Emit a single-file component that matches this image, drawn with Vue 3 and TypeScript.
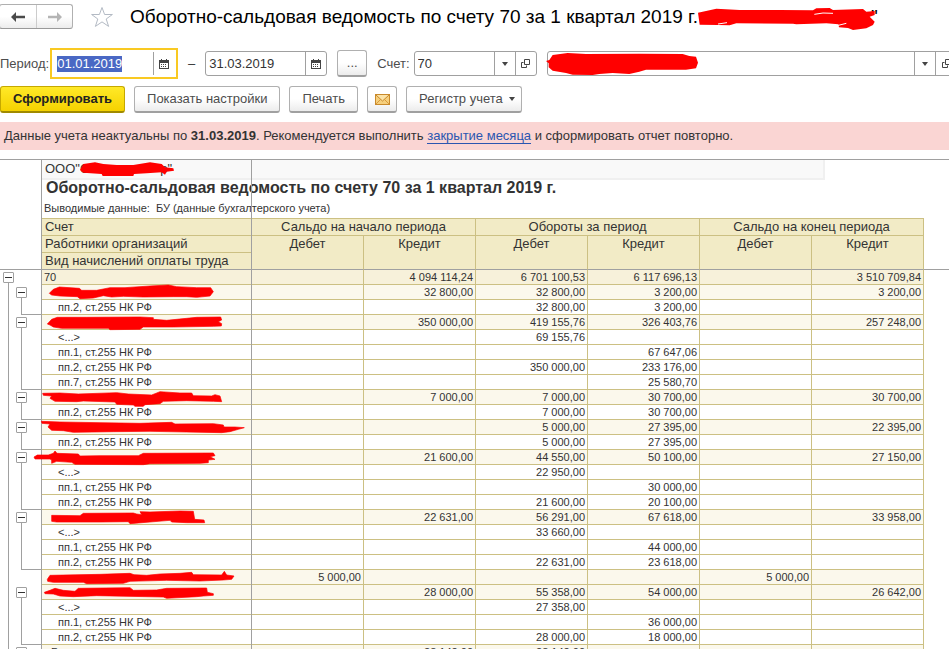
<script setup lang="ts">
import { computed, onMounted, ref } from 'vue'

type Kind = 'total' | 'group' | 'single' | 'item'

interface Row {
  name: string
  kind: Kind
  values: string[]
  mark?: { top: number; points: string }
}

const item1 = 'пп.1, ст.255 НК РФ'
const item2 = 'пп.2, ст.255 НК РФ'
const item7 = 'пп.7, ст.255 НК РФ'

const rows: Row[] = [
  { name: '70', kind: 'total', values: ['', '4 094 114,24', '6 701 100,53', '6 117 696,13', '', '3 510 709,84'] },
  {
    name: '', kind: 'group', values: ['', '32 800,00', '32 800,00', '3 200,00', '', '3 200,00'],
    mark: { top: 60, points: '148,85 160,73 178,66 238,70 245,76 290,76 330,68 375,68 450,63 505,60 530,65 590,68 632,68 640,80 630,93 590,97 560,95 520,95 430,96 370,94 335,96 310,92 280,99 240,101 232,95 180,93 155,90' },
  },
  { name: item2, kind: 'item', values: ['', '', '32 800,00', '3 200,00', '', ''] },
  {
    name: '', kind: 'group', values: ['', '350 000,00', '419 155,76', '326 403,76', '', '257 248,00'],
    mark: { top: 150, points: '142,177 155,163 172,157 260,157 420,156 460,158 460,163 500,166 560,160 590,157 662,156 665,165 655,170 665,176 664,183 640,184 520,186 430,186 420,193 330,194 325,190 240,190 185,190 160,186 150,180' },
  },
  { name: '<...>', kind: 'item', values: ['', '', '69 155,76', '', '', ''] },
  { name: item1, kind: 'item', values: ['', '', '', '67 647,06', '', ''] },
  { name: item2, kind: 'item', values: ['', '', '350 000,00', '233 176,00', '', ''] },
  { name: item7, kind: 'item', values: ['', '', '', '25 580,70', '', ''] },
  {
    name: '', kind: 'group', values: ['', '7 000,00', '7 000,00', '30 700,00', '', '30 700,00'],
    mark: { top: 375, points: '128,385 180,384 235,387 350,383 385,387 455,390 480,380 540,384 575,384 580,392 635,393 645,389 660,393 665,410 640,409 560,407 490,409 480,416 435,419 430,424 405,424 400,420 350,418 345,411 250,408 230,410 165,409 150,400 155,393 130,391' },
  },
  { name: item2, kind: 'item', values: ['', '', '7 000,00', '30 700,00', '', ''] },
  {
    name: '', kind: 'group', values: ['', '', '5 000,00', '27 395,00', '', '22 395,00'],
    mark: { top: 465, points: '124,469 180,471 300,473 420,475 515,472 525,477 640,476 670,480 672,486 705,486 733,488 715,493 690,500 665,503 560,501 450,499 340,500 220,502 190,497 155,496 144,486 150,477 126,475' },
  },
  { name: item2, kind: 'item', values: ['', '', '5 000,00', '27 395,00', '', ''] },
  {
    name: '', kind: 'group', values: ['', '21 600,00', '44 550,00', '50 100,00', '', '27 150,00'],
    mark: { top: 0, points: '102,21 112,15 145,15 160,10 165,3 171,10 235,12 240,18 300,17 415,17 430,10 640,9 645,17 630,20 645,28 625,30 625,38 600,40 450,41 430,44 225,43 215,37 170,34 155,40 155,30 150,27 105,27' },
  },
  { name: '<...>', kind: 'item', values: ['', '', '22 950,00', '', '', ''] },
  { name: item1, kind: 'item', values: ['', '', '', '30 000,00', '', ''] },
  { name: item2, kind: 'item', values: ['', '', '21 600,00', '20 100,00', '', ''] },
  {
    name: '', kind: 'group', values: ['', '22 631,00', '56 291,00', '67 618,00', '', '33 958,00'],
    mark: { top: 180, points: '155,196 240,197 250,190 400,189 410,192 425,194 420,185 450,186 540,183 580,184 584,208 612,210 614,218 560,218 515,216 510,211 450,216 390,221 385,215 300,216 170,216 155,214' },
  },
  { name: '<...>', kind: 'item', values: ['', '', '33 660,00', '', '', ''] },
  { name: item1, kind: 'item', values: ['', '', '', '44 000,00', '', ''] },
  { name: item2, kind: 'item', values: ['', '', '22 631,00', '23 618,00', '', ''] },
  {
    name: '', kind: 'single', values: ['5 000,00', '', '', '', '5 000,00', ''],
    mark: { top: 360, points: '142,388 150,376 300,373 390,370 402,374 440,376 480,372 540,370 575,367 580,374 665,375 673,364 680,375 702,378 695,388 670,390 600,393 500,391 390,394 370,400 260,401 250,397 160,397 143,394' },
  },
  {
    name: '', kind: 'group', values: ['', '28 000,00', '55 358,00', '54 000,00', '', '26 642,00'],
    mark: { top: 405, points: '133,427 150,421 165,415 190,421 225,424 235,415 390,413 400,421 470,420 500,415 620,414 622,427 640,431 640,436 610,438 590,440 500,445 490,441 290,437 220,440 180,438 160,432 135,431' },
  },
  { name: '<...>', kind: 'item', values: ['', '', '27 358,00', '', '', ''] },
  { name: item1, kind: 'item', values: ['', '', '', '36 000,00', '', ''] },
  { name: item2, kind: 'item', values: ['', '', '28 000,00', '18 000,00', '', ''] },
  { name: 'Б', kind: 'group', values: ['', '28 142,00', '28 142,00', '', '', ''] },
]

const collapsed = ref(new Set<number>())

function toggle(index: number) {
  const next = new Set(collapsed.value)
  if (next.has(index)) next.delete(index)
  else next.add(index)
  collapsed.value = next
}

const visibleRows = computed(() => {
  let owner = -1
  return rows
    .map((row, index) => {
      if (row.kind !== 'item') owner = index
      const last = row.kind === 'item' && rows[index + 1]?.kind !== 'item'
      return { ...row, index, owner, last }
    })
    .filter((row) => {
      if (row.index > 0 && collapsed.value.has(0)) return false
      return row.kind !== 'item' || !collapsed.value.has(row.owner)
    })
})

const dateFrom = ref('01.01.2019')
const dateTo = ref('31.03.2019')
const account = ref('70')
const company = ref('')
const fromInput = ref<HTMLInputElement | null>(null)

onMounted(() => {
  fromInput.value?.focus()
  fromInput.value?.select()
})
</script>

<template>
  <main class="page">
    <header class="titlebar">
      <div class="nav">
        <button type="button" aria-label="Назад">
          <svg width="14" height="10" viewBox="0 0 14 10"><path d="M0 5 5 0v3.8h9v2.4H5V10z" fill="#4a4a4a" /></svg>
        </button>
        <button type="button" aria-label="Вперед">
          <svg width="14" height="10" viewBox="0 0 14 10"><path d="M14 5 9 0v3.8H0v2.4h9V10z" fill="#b4b4b4" /></svg>
        </button>
      </div>
      <button type="button" class="star" aria-label="В избранное">
        <svg width="24" height="22" viewBox="0 0 24 22">
          <path d="M12 1.5 14.6 8.5H22.4L16.2 13 18.6 20.4 12 15.9 5.4 20.4 7.8 13 1.6 8.5H9.4Z" fill="#fff" stroke="#b3bac4" stroke-width="1" />
        </svg>
      </button>
      <h1>Оборотно-сальдовая ведомость по счету 70 за 1 квартал 2019 г.</h1>
      <svg class="title-mark" width="178" height="30" viewBox="175 6 534 90">
        <polygon points="175,38 230,26 300,30 420,30 520,31 530,25 570,24 580,30 670,27 680,35 705,33 705,45 690,50 705,65 700,75 680,85 640,90 625,84 598,82 596,73 560,70 470,73 460,71 290,70 270,76 235,75 180,74" fill="#f00" />
        <path d="M524 43 550 39 580 40M592 77 620 70M235 72 262 68" fill="none" stroke="#fff" stroke-width="3" />
      </svg>
      <span class="title-end">"</span>
    </header>

    <form class="filters" @submit.prevent>
      <label for="from">Период:</label>
      <div class="field date active">
        <input id="from" ref="fromInput" v-model="dateFrom" type="text" />
        <button type="button" aria-label="Выбрать дату начала">
          <svg width="10" height="10" viewBox="0 0 10 10"><path d="M0 1h2V0h1v1h4V0h1v1h2v9H0zM1 4v5h8V4z" fill="#444" fill-rule="evenodd" /><path d="M2 5h1v1H2zM4 5h1v1H4zM6 5h1v1H6zM2 7h1v1H2zM4 7h1v1H4zM6 7h1v1H6z" fill="#444" /></svg>
        </button>
      </div>
      <span class="dash">–</span>
      <div class="field date">
        <input v-model="dateTo" type="text" aria-label="Конец периода" />
        <button type="button" aria-label="Выбрать дату конца">
          <svg width="10" height="10" viewBox="0 0 10 10"><path d="M0 1h2V0h1v1h4V0h1v1h2v9H0zM1 4v5h8V4z" fill="#444" fill-rule="evenodd" /><path d="M2 5h1v1H2zM4 5h1v1H4zM6 5h1v1H6zM2 7h1v1H2zM4 7h1v1H4zM6 7h1v1H6z" fill="#444" /></svg>
        </button>
      </div>
      <button type="button" class="btn dots">...</button>
      <label for="account">Счет:</label>
      <div class="field account">
        <input id="account" v-model="account" type="text" />
        <button type="button" aria-label="Список счетов">
          <svg width="6" height="4" viewBox="0 0 6 4"><path d="M0 0h6L3 4z" fill="#444" /></svg>
        </button>
        <button type="button" aria-label="Открыть счет">
          <svg width="9" height="9" viewBox="0 0 9 9"><path d="M3.5 .5h5v5h-5zM2.5 3.5h-2v5h5v-2" fill="none" stroke="#444" /></svg>
        </button>
      </div>
      <div class="field company">
        <input v-model="company" type="text" aria-label="Организация" />
        <svg class="company-mark" width="152" height="24" viewBox="680 156 456 72">
          <polygon points="680,183 690,180 700,165 745,159 800,162 960,161 1090,162 1110,168 1130,170 1136,188 1130,205 1100,209 980,209 960,215 930,222 880,219 840,222 820,225 760,224 740,219 700,212 688,202 688,190" fill="#f00" />
        </svg>
        <button type="button" aria-label="Список организаций">
          <svg width="6" height="4" viewBox="0 0 6 4"><path d="M0 0h6L3 4z" fill="#444" /></svg>
        </button>
        <button type="button" aria-label="Открыть организацию">
          <svg width="9" height="9" viewBox="0 0 9 9"><path d="M3.5 .5h5v5h-5zM2.5 3.5h-2v5h5v-2" fill="none" stroke="#444" /></svg>
        </button>
      </div>
    </form>

    <div class="commands">
      <button type="button" class="btn primary">Сформировать</button>
      <button type="button" class="btn">Показать настройки</button>
      <button type="button" class="btn">Печать</button>
      <button type="button" class="btn mail" aria-label="Отправить по почте">
        <svg width="15" height="11" viewBox="0 0 15 11">
          <rect x=".5" y=".5" width="14" height="10" fill="#f6cf7c" stroke="#c98a2b" />
          <path d="M1 10 5.5 5.5M14 10 9.5 5.5" stroke="#d79a3c" />
          <path d="M1 1 7.5 7 14 1" fill="#fbe3a8" stroke="#c98a2b" />
        </svg>
      </button>
      <button type="button" class="btn menu">
        Регистр учета
        <svg width="6" height="4" viewBox="0 0 6 4"><path d="M0 0h6L3 4z" fill="#444" /></svg>
      </button>
    </div>

    <p class="notice">
      Данные учета неактуальны по <b>31.03.2019</b>. Рекомендуется выполнить <a href="#close">закрытие месяца</a> и сформировать отчет повторно.
    </p>

    <section class="sheet">
      <div class="preamble">
        <div class="org">
          <span>ООО"С</span>
          <svg width="94" height="18" viewBox="240 138 282 54">
            <polygon points="240,168 250,150 285,145 310,150 350,153 400,153 450,145 485,150 495,160 520,163 522,170 500,173 495,182 485,175 440,178 402,180 400,186 308,186 305,180 250,176" fill="#f00" />
          </svg>
          <span class="org-end">р"</span>
        </div>
        <h2>Оборотно-сальдовая ведомость по счету 70 за 1 квартал 2019 г.</h2>
        <p>Выводимые данные:&nbsp; БУ (данные бухгалтерского учета)</p>
      </div>

      <table>
        <colgroup>
          <col class="c-g1" />
          <col class="c-g2" />
          <col class="c-name" />
          <col v-for="n in 6" :key="n" class="c-num" />
          <col />
        </colgroup>
        <thead>
          <tr>
            <td colspan="2"></td>
            <th class="left">Счет</th>
            <th colspan="2">Сальдо на начало периода</th>
            <th colspan="2">Обороты за период</th>
            <th colspan="2">Сальдо на конец периода</th>
            <td></td>
          </tr>
          <tr>
            <td colspan="2"></td>
            <th class="left">Работники организаций</th>
            <th v-for="n in 6" :key="n" rowspan="2" class="bottom">{{ n % 2 ? 'Дебет' : 'Кредит' }}</th>
            <td></td>
          </tr>
          <tr>
            <td colspan="2" class="bottom"></td>
            <th class="left bottom">Вид начислений оплаты труда</th>
            <td class="bottom"></td>
          </tr>
        </thead>
        <tbody>
          <tr v-for="row in visibleRows" :key="row.index" :class="row.kind">
            <td class="g1">
              <button v-if="row.kind === 'total'" type="button" class="box" aria-label="Свернуть" @click="toggle(row.index)">
                <svg width="9" height="9" viewBox="0 0 9 9"><path d="M1 4h7v1H1z" fill="#333" /></svg>
              </button>
            </td>
            <td class="g2" :class="{ last: row.last }">
              <button v-if="row.kind === 'group'" type="button" class="box" aria-label="Свернуть" @click="toggle(row.index)">
                <svg width="9" height="9" viewBox="0 0 9 9"><path d="M1 4h7v1H1z" fill="#333" /></svg>
              </button>
            </td>
            <td class="name">
              {{ row.name }}
              <svg v-if="row.mark" class="mark" width="210" height="15" :viewBox="`126 ${row.mark.top} 630 45`">
                <polygon :points="row.mark.points" fill="#f00" stroke="#f00" stroke-width="2" stroke-linejoin="round" />
              </svg>
            </td>
            <td v-for="(value, i) in row.values" :key="i" class="num">{{ value }}</td>
            <td class="rest"></td>
          </tr>
        </tbody>
      </table>
    </section>
  </main>
</template>

<style>
body {
  background: #fff;
}
</style>

<style scoped>
.page {
  height: 100vh;
  overflow: hidden;
  display: flex;
  flex-direction: column;
  background: #fff;
  color: #333;
  font: 13px/16px "Liberation Sans", Arial, sans-serif;
}
button,
input {
  font: inherit;
  color: inherit;
  margin: 0;
  padding: 0;
  box-sizing: border-box;
}
svg {
  display: block;
  flex: none;
}
.titlebar {
  display: flex;
  align-items: center;
  height: 26px;
  padding-top: 4px;
  flex: none;
}
.nav {
  display: flex;
  align-self: flex-start;
  margin-left: -1px;
  height: 25px;
  box-sizing: border-box;
  border: 1px solid #b0b0b0;
  border-bottom-color: #999;
  border-radius: 3px;
  background: linear-gradient(#fff 50%, #ececec);
}
.nav button {
  width: 36px;
  display: flex;
  align-items: center;
  justify-content: center;
  border: 0;
  background: none;
}
.nav button + button {
  border-left: 1px solid #ccc;
}
.star {
  margin: 0 16px 0 17px;
  border: 0;
  background: none;
}
h1 {
  margin: 0;
  font-size: 19px;
  line-height: 24px;
  font-weight: 400;
  color: #000;
  white-space: nowrap;
}
.title-mark {
  z-index: 1;
}
.title-end {
  font-size: 19px;
  margin-left: -5px;
  color: #000;
}
.filters {
  display: flex;
  align-items: center;
  height: 31px;
  margin-top: 18px;
  flex: none;
}
.filters label {
  color: #4d4d4d;
}
.field {
  position: relative;
  display: flex;
  height: 25px;
  box-sizing: border-box;
  border: 1px solid #a0a0a0;
  border-radius: 3px;
  background: #fff;
}
.field input {
  flex: 1;
  min-width: 0;
  padding: 0 4px 0 3px;
  border: 0;
  outline: 0;
  background: none;
}
.field input::selection {
  background: #4a68c4;
  color: #fff;
}
.field button {
  flex: none;
  width: 21px;
  display: flex;
  align-items: center;
  justify-content: center;
  border: 0;
  border-left: 1px solid #a0a0a0;
  background: none;
}
.date {
  width: 122px;
}
.date.active {
  width: 128px;
  height: 31px;
  margin-left: 1px;
  padding: 2px;
  border: 2px solid #f9c922;
  border-radius: 0;
}
.dash {
  width: 27px;
  text-align: center;
}
.btn {
  height: 27px;
  padding: 0 12px;
  border: 1px solid #b0b0b0;
  border-bottom: 2px solid #a0a0a0;
  border-radius: 3px;
  background: linear-gradient(#fff 50%, #ececec);
  color: #4d4d4d;
  white-space: nowrap;
}
.dots {
  width: 30px;
  padding: 0;
  margin: 0 10px;
}
.account {
  width: 123px;
  margin: 0 10px 0 4px;
}
.company {
  flex: 1;
  margin-right: -8px;
}
.company-mark {
  position: absolute;
  left: -2px;
  top: 0;
}
.commands {
  display: flex;
  align-items: center;
  gap: 9px;
  margin-top: 7px;
  flex: none;
}
.primary {
  border-color: #c5a800;
  border-bottom-color: #a08a00;
  background: linear-gradient(#ffe928, #f5d200);
  color: #222;
  font-weight: 700;
}
.mail {
  width: 30px;
  padding: 0;
  display: flex;
  align-items: center;
  justify-content: center;
}
.menu {
  display: flex;
  align-items: center;
  gap: 6px;
  padding-right: 6px;
}
.notice {
  flex: none;
  margin: 9px 0;
  padding: 6px 4px;
  background: #fad5d3;
  white-space: nowrap;
}
.notice a {
  color: #2b55b0;
  text-decoration: none;
  border-bottom: 1px solid #2b55b0;
}
.sheet {
  position: relative;
  flex: 1;
  min-height: 0;
  overflow: hidden;
  border-top: 1px solid #a0a0a0;
}
.sheet::before,
.sheet::after {
  content: "";
  position: absolute;
  top: 0;
  bottom: 0;
  left: 41px;
  width: 1px;
  background: #a0a0a0;
  z-index: 1;
}
.sheet::after {
  left: 251px;
}
.preamble {
  padding-left: 42px;
  height: 58px;
}
.org {
  display: flex;
  align-items: center;
  height: 20px;
  box-sizing: border-box;
  max-width: 783px;
  padding-left: 3px;
  border: solid #f0f0f0;
  border-width: 0 2px 2px 0;
  background: #f9f9f9;
}
.org svg {
  margin-left: -9px;
  z-index: 2;
}
.org-end {
  margin-left: -14px;
}
h2 {
  margin: 0;
  padding-left: 4px;
  font-size: 16px;
  line-height: 16px;
  white-space: nowrap;
}
.preamble p {
  margin: 0;
  padding: 5px 0 0 2px;
  font-size: 11px;
  line-height: 15px;
  white-space: nowrap;
}
table {
  width: 100%;
  table-layout: fixed;
  border-collapse: separate;
  border-spacing: 0;
}
.c-g1 {
  width: 15px;
}
.c-g2 {
  width: 27px;
}
.c-name {
  width: 210px;
}
.c-num {
  width: 112px;
}
td,
th {
  box-sizing: border-box;
  padding: 0;
  font-weight: 400;
  white-space: nowrap;
}
th {
  height: 17px;
  line-height: 16px;
  vertical-align: top;
  text-align: center;
  background: #f2ebc6;
  border: solid #ccc083;
  border-width: 0 1px 1px 0;
}
thead tr:first-child th {
  height: 18px;
  border-top-width: 1px;
}
th.left {
  text-align: left;
  padding-left: 3px;
}
th.bottom,
td.bottom {
  border-bottom: 1px solid #a0a0a0;
}
tbody td {
  height: 15px;
  font-size: 11px;
  line-height: 14px;
}
.name,
.num {
  border: solid #ccc083;
  border-width: 0 1px 1px 0;
}
.name {
  position: relative;
  padding-left: 16px;
}
.total .name {
  padding-left: 2px;
}
.group .name {
  padding-left: 9px;
}
.num {
  text-align: right;
  padding-right: 2px;
}
.total .name,
.total .num {
  background: #f7f1da;
}
.group .name,
.group .num,
.single .name,
.single .num {
  background: #fbf8ec;
}
.mark {
  position: absolute;
  left: 0;
  top: 0;
  overflow: visible;
  z-index: 2;
}
.g1,
.g2 {
  vertical-align: top;
  background: linear-gradient(#a0a0a0, #a0a0a0) 8px 0 / 1px 100% no-repeat;
}
.total .g1 {
  background-position: 8px 100%;
  background-size: 1px 3px;
}
.g2 {
  background-position: 6px 0;
}
.total .g2,
.single .g2 {
  background: none;
}
.group .g2 {
  background-position: 6px 100%;
  background-size: 1px 3px;
}
.g2.last {
  background: linear-gradient(#a0a0a0, #a0a0a0) 6px 0 / 1px 100% no-repeat,
    linear-gradient(#a0a0a0, #a0a0a0) 6px 100% / 21px 1px no-repeat;
}
.box {
  display: block;
  width: 11px;
  height: 11px;
  margin: 2px 0 0 3px;
  border: 1px solid #a0a0a0;
  border-radius: 1px;
  background: #fff;
}
.g2 .box {
  margin-left: 1px;
}
</style>
